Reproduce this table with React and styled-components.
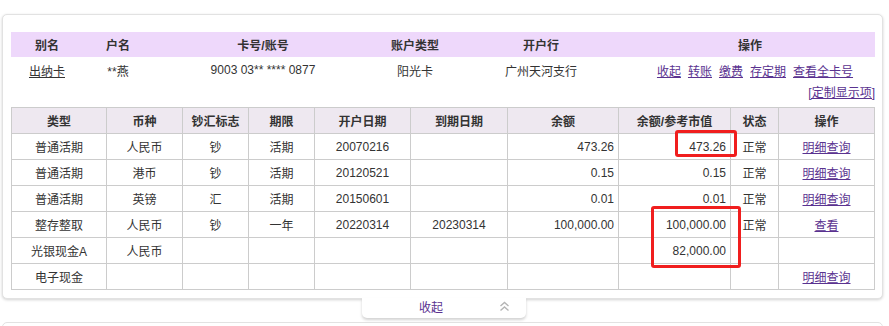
import React from 'react'
import styled, { createGlobalStyle } from 'styled-components'

const GlobalStyle = createGlobalStyle`
  body {
    margin: 0;
    background: #fff;
    font-family: "Liberation Sans", "Noto Sans CJK SC", sans-serif;
    font-size: 12px;
    color: #333;
  }
`

const Page = styled.div`
  width: 889px;
  height: 326px;
  overflow: hidden;
  padding-top: 14px;
  box-sizing: border-box;
`

const Card = styled.div`
  width: 881px;
  margin-left: 2px;
  box-sizing: border-box;
  border: 1px solid #e2e2e2;
  border-radius: 5px;
  box-shadow: 0 1px 3px rgba(0, 0, 0, 0.18);
  padding: 17px 7px 8px 8px;
  background: #fff;
  position: relative;
`

const SummaryTable = styled.table`
  width: 864px;
  border-collapse: collapse;
  table-layout: fixed;

  th {
    background: #eed8fb;
    height: 25px;
    font-weight: bold;
    padding: 0;
    text-align: center;
    color: #333;
  }

  td {
    height: 26px;
    padding: 0;
    text-align: center;
  }
`

const Link = styled.a`
  color: #5a3290;
  text-decoration: underline;
  cursor: pointer;
`

const DarkLink = styled(Link)`
  color: #333;
`

const Actions = styled.div`
  display: flex;
  justify-content: center;
  gap: 7px;
  padding-left: 10px;
`

const CustomRow = styled.div`
  display: flex;
  justify-content: flex-end;
  height: 24px;
  line-height: 20px;
`

const TableWrap = styled.div`
  position: relative;
`

const DetailTable = styled.table`
  width: 864px;
  border-collapse: collapse;
  table-layout: fixed;

  th, td {
    border: 1px solid #cccccc;
    height: 25px;
    padding: 0 4px;
    text-align: center;
    white-space: nowrap;
  }

  th {
    background: #eee8f0;
    font-weight: bold;
  }
`

const Cell = styled.td`
  && {
    text-align: ${p => p.$align || 'center'};
  }
`

const Mark = styled.div`
  position: absolute;
  border: 3px solid #f01e1e;
  border-radius: 3px;
  box-sizing: border-box;
`

const Tab = styled.div`
  display: flex;
  align-items: center;
  justify-content: space-between;
  width: 164px;
  height: 20px;
  margin-left: 362px;
  margin-top: -1px;
  padding: 0 16px 3px 57px;
  box-sizing: border-box;
  background: #fff;
  border-radius: 0 0 5px 5px;
  box-shadow: 0 2px 3px rgba(0, 0, 0, 0.18);
  position: relative;
  z-index: 1;
  color: #5a3290;
`

const NextCard = styled.div`
  width: 881px;
  height: 40px;
  margin: 4px 0 0 2px;
  box-sizing: border-box;
  border: 1px solid #e2e2e2;
  border-radius: 5px;
`

const cols = [95, 76, 66, 66, 96, 97, 111, 112, 48, 96]

const rows = [
  ['普通活期', '人民币', '钞', '活期', '20070216', '', '473.26', '473.26', '正常', '明细查询'],
  ['普通活期', '港币', '钞', '活期', '20120521', '', '0.15', '0.15', '正常', '明细查询'],
  ['普通活期', '英镑', '汇', '活期', '20150601', '', '0.01', '0.01', '正常', '明细查询'],
  ['整存整取', '人民币', '钞', '一年', '20220314', '20230314', '100,000.00', '100,000.00', '正常', '查看'],
  ['光银现金A', '人民币', '', '', '', '', '', '82,000.00', '', ''],
  ['电子现金', '', '', '', '', '', '', '', '', '明细查询'],
]

function Chevrons() {
  return (
    <svg width="11" height="11" viewBox="0 0 11 11" fill="none" stroke="#b5b5b5" strokeWidth="1.4">
      <polyline points="1.5,5 5.5,1.5 9.5,5" />
      <polyline points="1.5,9.5 5.5,6 9.5,9.5" />
    </svg>
  )
}

export default function App() {
  return (
    <Page>
      <GlobalStyle />
      <Card>
        <SummaryTable>
          <colgroup>
            <col style={{ width: 72 }} />
            <col style={{ width: 70 }} />
            <col style={{ width: 220 }} />
            <col style={{ width: 84 }} />
            <col style={{ width: 168 }} />
            <col style={{ width: 250 }} />
          </colgroup>
          <thead>
            <tr>
              <th>别名</th>
              <th>户名</th>
              <th>卡号/账号</th>
              <th>账户类型</th>
              <th>开户行</th>
              <th>操作</th>
            </tr>
          </thead>
          <tbody>
            <tr>
              <td><DarkLink>出纳卡</DarkLink></td>
              <td>**燕</td>
              <td>9003 03** **** 0877</td>
              <td>阳光卡</td>
              <td>广州天河支行</td>
              <td>
                <Actions>
                  <Link>收起</Link>
                  <Link>转账</Link>
                  <Link>缴费</Link>
                  <Link>存定期</Link>
                  <Link>查看全卡号</Link>
                </Actions>
              </td>
            </tr>
          </tbody>
        </SummaryTable>
        <CustomRow>
          <Link>[定制显示项]</Link>
        </CustomRow>
        <TableWrap>
          <DetailTable>
            <colgroup>
              {cols.map((w, i) => <col key={i} style={{ width: w }} />)}
            </colgroup>
            <thead>
              <tr>
                <th>类型</th>
                <th>币种</th>
                <th>钞汇标志</th>
                <th>期限</th>
                <th>开户日期</th>
                <th>到期日期</th>
                <th>余额</th>
                <th>余额/参考市值</th>
                <th>状态</th>
                <th>操作</th>
              </tr>
            </thead>
            <tbody>
              {rows.map((r, i) => (
                <tr key={i}>
                  {r.map((v, j) => (
                    <Cell key={j} $align={j === 6 || j === 7 ? 'right' : 'center'}>
                      {j === 9 && v ? <Link>{v}</Link> : v}
                    </Cell>
                  ))}
                </tr>
              ))}
            </tbody>
          </DetailTable>
          <Mark style={{ left: 664, top: 23, width: 62, height: 27 }} />
          <Mark style={{ left: 640, top: 99, width: 90, height: 62 }} />
        </TableWrap>
      </Card>
      <Tab>
        <span>收起</span>
        <Chevrons />
      </Tab>
      <NextCard />
    </Page>
  )
}
